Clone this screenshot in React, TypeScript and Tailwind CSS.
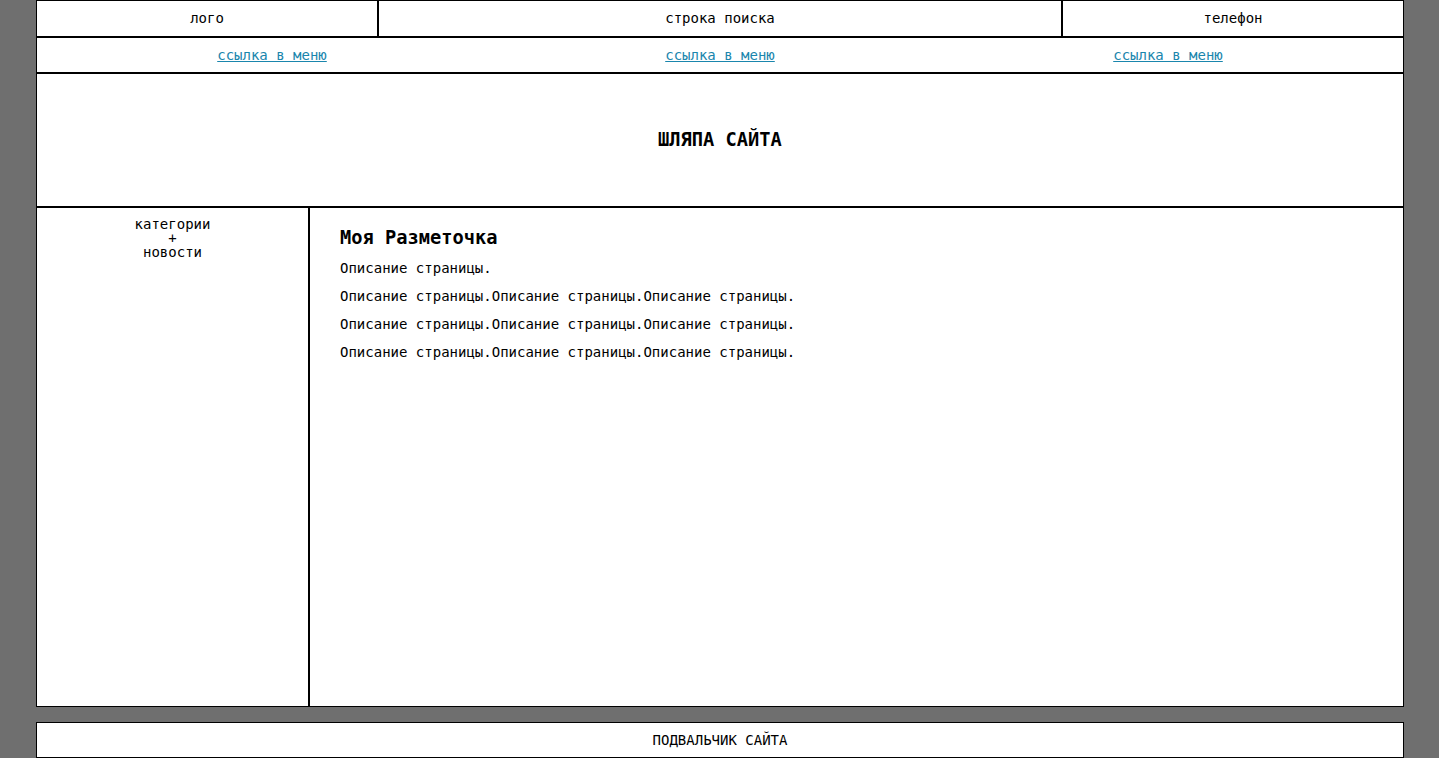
export default function App() {
    return (
        <div className="min-h-[758px] bg-[#6f6f6f] font-['DejaVu_Sans_Mono',monospace] text-[14px] text-black">
            <div className="ml-[36px] w-[1368px]">
                <div className="flex h-[37px]">
                    <div className="w-[342px] border border-black bg-white flex items-center justify-center">лого</div>
                    <div className="w-[684px] border border-black bg-white flex items-center justify-center">строка поиска</div>
                    <div className="w-[342px] border border-black bg-white flex items-center justify-center">телефон</div>
                </div>

                <div className="h-[36px] border border-black bg-white grid grid-cols-3 px-[11px] items-center text-center">
                    <a href="#" className="text-[#1a86ad] underline">ссылка в меню</a>
                    <a href="#" className="text-[#1a86ad] underline">ссылка в меню</a>
                    <a href="#" className="text-[#1a86ad] underline">ссылка в меню</a>
                </div>

                <div className="h-[134px] border border-black bg-white flex items-center justify-center">
                    <h1 className="text-[18.7px] font-bold">ШЛЯПА САЙТА</h1>
                </div>

                <div className="flex h-[500px]">
                    <aside className="w-[273px] border border-black bg-white pt-[9px] text-center leading-[14px]">
                        категории<br />+<br />новости
                    </aside>
                    <main className="flex-1 border border-black bg-white pl-[30px] pt-[18px]">
                        <h2 className="text-[18.7px] font-bold leading-[24px] mb-[10px]">Моя Разметочка</h2>
                        <div className="flex flex-col gap-[12px] leading-[16px]">
                            <p>Описание страницы.</p>
                            <p>Описание страницы.Описание страницы.Описание страницы.</p>
                            <p>Описание страницы.Описание страницы.Описание страницы.</p>
                            <p>Описание страницы.Описание страницы.Описание страницы.</p>
                        </div>
                    </main>
                </div>

                <footer className="mt-[15px] h-[36px] border border-black bg-white flex items-center justify-center">
                    ПОДВАЛЬЧИК САЙТА
                </footer>
            </div>
        </div>
    );
}
